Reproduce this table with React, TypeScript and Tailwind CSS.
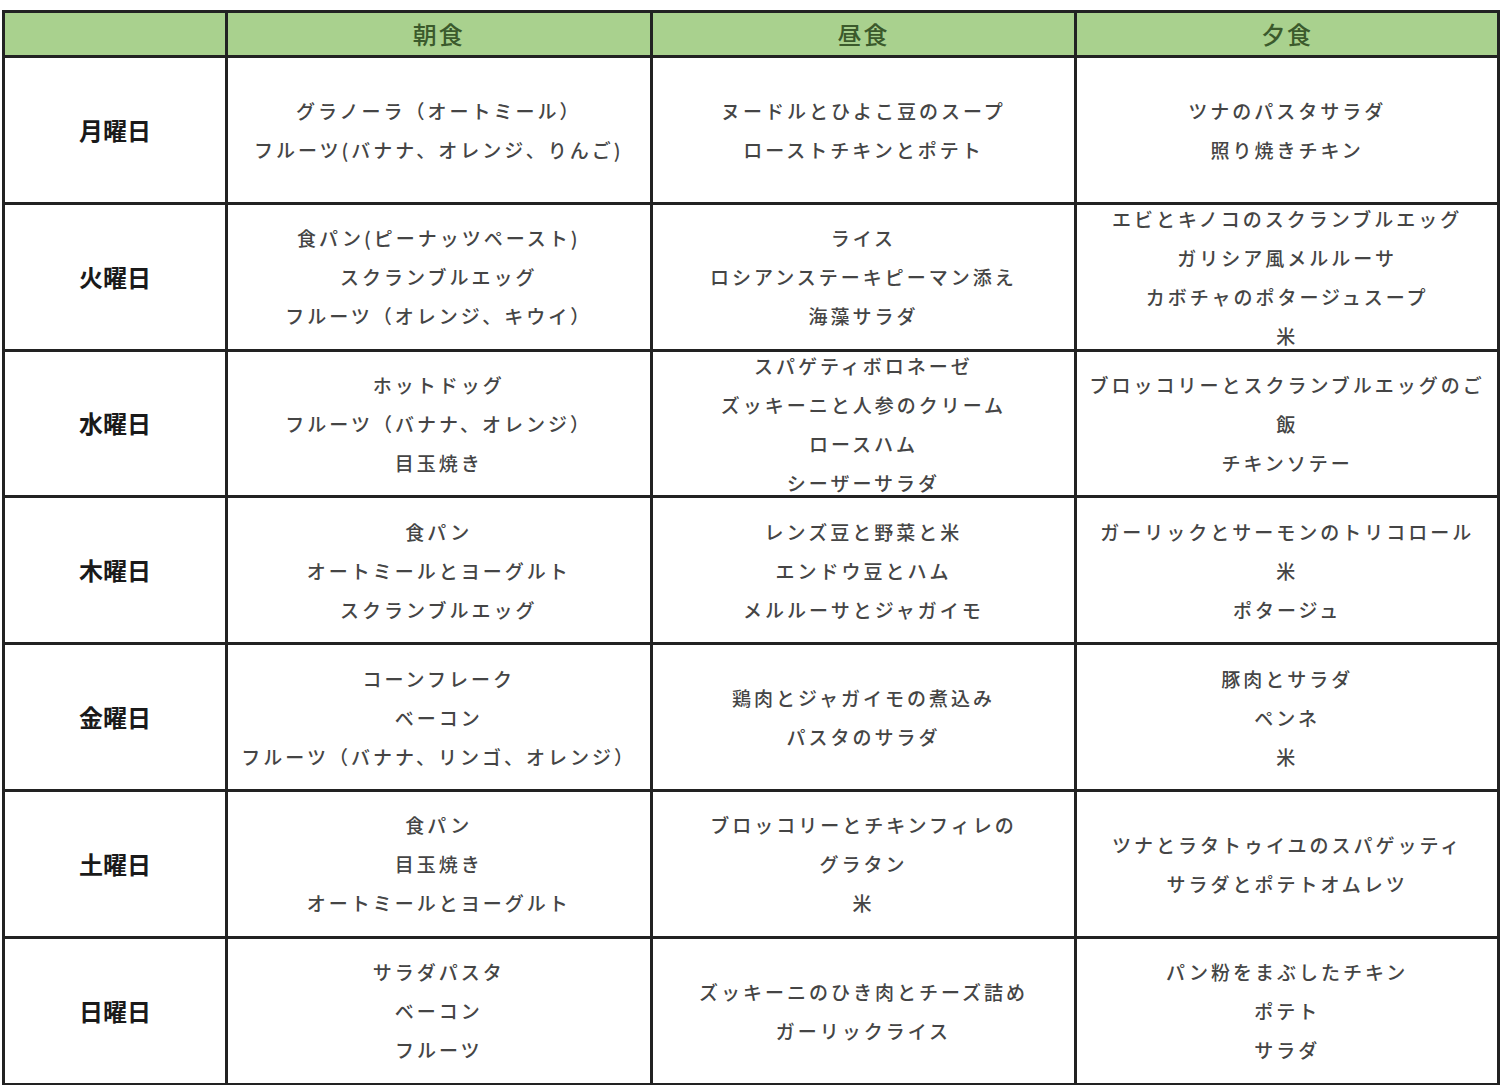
const days = [
  {
    day: '月曜日',
    meals: [
      ['グラノーラ（オートミール）', 'フルーツ(バナナ、オレンジ、りんご)'],
      ['ヌードルとひよこ豆のスープ', 'ローストチキンとポテト'],
      ['ツナのパスタサラダ', '照り焼きチキン'],
    ],
  },
  {
    day: '火曜日',
    meals: [
      ['食パン(ピーナッツペースト)', 'スクランブルエッグ', 'フルーツ（オレンジ、キウイ）'],
      ['ライス', 'ロシアンステーキピーマン添え', '海藻サラダ'],
      ['エビとキノコのスクランブルエッグ', 'ガリシア風メルルーサ', 'カボチャのポタージュスープ', '米'],
    ],
  },
  {
    day: '水曜日',
    meals: [
      ['ホットドッグ', 'フルーツ（バナナ、オレンジ）', '目玉焼き'],
      ['スパゲティボロネーゼ', 'ズッキーニと人参のクリーム', 'ロースハム', 'シーザーサラダ'],
      ['ブロッコリーとスクランブルエッグのご飯', 'チキンソテー'],
    ],
  },
  {
    day: '木曜日',
    meals: [
      ['食パン', 'オートミールとヨーグルト', 'スクランブルエッグ'],
      ['レンズ豆と野菜と米', 'エンドウ豆とハム', 'メルルーサとジャガイモ'],
      ['ガーリックとサーモンのトリコロール', '米', 'ポタージュ'],
    ],
  },
  {
    day: '金曜日',
    meals: [
      ['コーンフレーク', 'ベーコン', 'フルーツ（バナナ、リンゴ、オレンジ）'],
      ['鶏肉とジャガイモの煮込み', 'パスタのサラダ'],
      ['豚肉とサラダ', 'ペンネ', '米'],
    ],
  },
  {
    day: '土曜日',
    meals: [
      ['食パン', '目玉焼き', 'オートミールとヨーグルト'],
      ['ブロッコリーとチキンフィレの', 'グラタン', '米'],
      ['ツナとラタトゥイユのスパゲッティ', 'サラダとポテトオムレツ'],
    ],
  },
  {
    day: '日曜日',
    meals: [
      ['サラダパスタ', 'ベーコン', 'フルーツ'],
      ['ズッキーニのひき肉とチーズ詰め', 'ガーリックライス'],
      ['パン粉をまぶしたチキン', 'ポテト', 'サラダ'],
    ],
  },
];

const font = { fontFamily: '"Noto Sans CJK JP", "Noto Sans", sans-serif' };

export default function App() {
  return (
    <div className="min-h-screen bg-white pt-[10px] pl-[2px]" style={font}>
      <table className="table-fixed border-collapse">
        <colgroup>
          <col className="w-[223px]" />
          <col className="w-[425px]" />
          <col className="w-[425px]" />
          <col className="w-[423px]" />
        </colgroup>
        <thead>
          <tr className="bg-[#a9d18e]">
            <th className="border-[3px] border-[#222] p-0" />
            {['朝食', '昼食', '夕食'].map(h => (
              <th key={h} className="border-[3px] border-[#222] p-0">
                <div className="h-[42px] flex items-center justify-center text-[24px] font-medium text-[#3b5a2c] tracking-[2px]">
                  {h}
                </div>
              </th>
            ))}
          </tr>
        </thead>
        <tbody>
          {days.map(d => (
            <tr key={d.day}>
              <td className="border-[3px] border-[#222] p-0">
                <div className="h-[143.8px] flex items-center justify-center text-[24px] font-bold text-[#1a1a1a]">
                  {d.day}
                </div>
              </td>
              {d.meals.map((lines, i) => (
                <td key={i} className="border-[3px] border-[#222] p-0">
                  <div className="h-[143.8px] px-[8px] flex flex-col items-center justify-center text-center text-[19px] font-medium leading-[39px] tracking-[3px] text-[#454545] overflow-visible">
                    {lines.map((l, j) => (
                      <div key={j}>{l}</div>
                    ))}
                  </div>
                </td>
              ))}
            </tr>
          ))}
        </tbody>
      </table>
    </div>
  );
}
